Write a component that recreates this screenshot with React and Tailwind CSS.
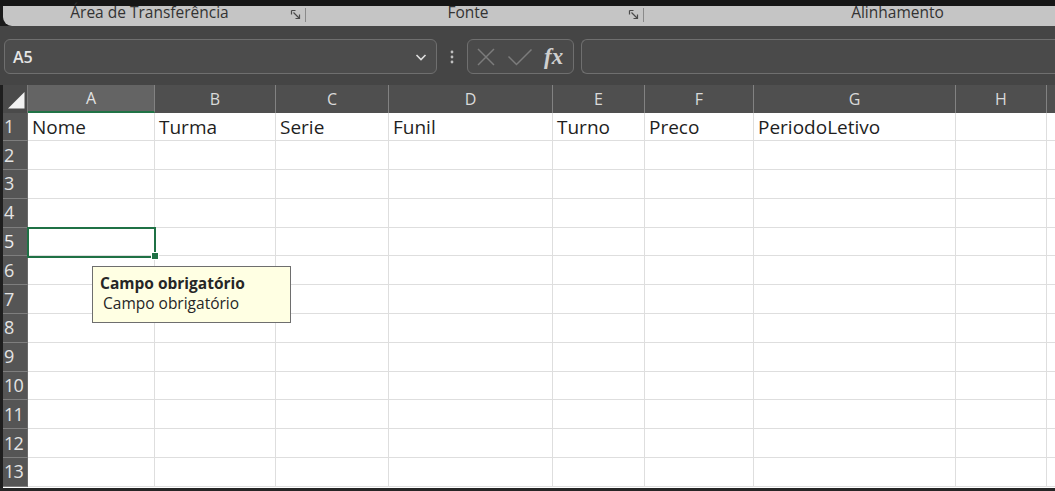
import React from "react";

const cols = [
  { l: "A", w: 127 },
  { l: "B", w: 121 },
  { l: "C", w: 113 },
  { l: "D", w: 164 },
  { l: "E", w: 92 },
  { l: "F", w: 109 },
  { l: "G", w: 202 },
  { l: "H", w: 91 },
  { l: "", w: 20 },
];

const row1 = ["Nome", "Turma", "Serie", "Funil", "Turno", "Preco", "PeriodoLetivo", "", ""];

function Launcher() {
  return (
    <svg width="12" height="12" viewBox="0 0 12 12" className="text-[#4a4a4a]">
      <path d="M1.5 1.5h4M1.5 1.5v4" stroke="currentColor" strokeWidth="1.2" fill="none" />
      <path d="M3.5 3.5l6 6M9.5 5.5v4h-4" stroke="currentColor" strokeWidth="1.2" fill="none" />
    </svg>
  );
}

export default function App() {
  const rows = Array.from({ length: 13 }, (_, i) => i + 1);
  return (
    <div
      className="w-[1055px] h-[491px] overflow-hidden flex flex-col bg-[#1b1b1b]"
      style={{ fontFamily: '"Open Sans", "Noto Sans", sans-serif' }}
    >
      {/* top band */}
      <div className="h-[6px] bg-[#161616] shrink-0" />
      {/* ribbon group labels */}
      <div className="h-[20px] shrink-0 ml-[3px] bg-[#c5c5c5] rounded-bl-[9px] flex items-start text-[15.5px] text-[#333333] leading-none">
        <div className="w-[287px] shrink-0 flex justify-center pl-[6px] -mt-[1px]">Área de Transferência</div>
        <div className="shrink-0 mt-[2px] flex items-center">
          <Launcher />
          <div className="w-px h-[14px] bg-[#8a8a8a] ml-[3px]" />
        </div>
        <div className="w-[322px] shrink-0 flex justify-center pl-[2px] -mt-[1px]">Fonte</div>
        <div className="shrink-0 mt-[2px] flex items-center">
          <Launcher />
          <div className="w-px h-[14px] bg-[#8a8a8a] ml-[3px]" />
        </div>
        <div className="flex-1 min-w-0 flex justify-center -mt-[1px] pl-[96px]">Alinhamento</div>
      </div>
      {/* formula bar */}
      <div className="h-[59px] shrink-0 bg-[#454545] flex items-center pl-[4px] pt-[2px]">
        <div className="w-[433px] h-[35px] rounded-[6px] border border-[#6f6f6f] bg-[#4c4c4c] flex items-center justify-between pl-[8px] pr-[8px]">
          <span className="text-[16px] font-semibold text-[#e6e6e6]">A5</span>
          <svg width="14" height="10" viewBox="0 0 14 10">
            <path d="M2.5 3l4.5 4.5L11.5 3" stroke="#dedede" strokeWidth="1.6" fill="none" />
          </svg>
        </div>
        <div className="w-[30px] flex justify-center">
          <svg width="4" height="16" viewBox="0 0 4 16">
            <circle cx="2" cy="3" r="1.4" fill="#bfbfbf" />
            <circle cx="2" cy="8" r="1.4" fill="#bfbfbf" />
            <circle cx="2" cy="13" r="1.4" fill="#bfbfbf" />
          </svg>
        </div>
        <div className="w-[107px] h-[35px] rounded-[6px] border border-[#6f6f6f] bg-[#4a4a4a] flex items-center pl-[8px] gap-[11px]">
          <svg width="20" height="20" viewBox="0 0 20 20">
            <path d="M2 2l16 16M18 2L2 18" stroke="#7c7c7c" strokeWidth="1.5" fill="none" />
          </svg>
          <svg width="26" height="18" viewBox="0 0 26 18">
            <path d="M1.5 8.5l8 8L24.5 1.5" stroke="#7c7c7c" strokeWidth="1.5" fill="none" />
          </svg>
          <span
            className="text-[23px] italic font-bold text-[#cfcfcf] leading-none"
            style={{ fontFamily: '"Liberation Serif", "DejaVu Serif", serif' }}
          >
            fx
          </span>
        </div>
        <div className="flex-1 h-[35px] ml-[7px] rounded-l-[6px] border border-r-0 border-[#6f6f6f] bg-[#4a4a4a]" />
      </div>
      {/* grid */}
      <div className="flex-1 relative bg-white border-l-[3px] border-[#1e1e1e] flex flex-col">
        {/* header row */}
        <div className="flex h-[27.5px] shrink-0 bg-[#4f4f4f]">
          <div className="w-[25px] shrink-0 bg-[#4a4a4a] border-r border-[#7a7a7a] relative">
            <svg width="25" height="27" viewBox="0 0 25 27" className="absolute left-0 top-0">
              <path d="M5 23.5H21.5V7z" fill="#f2f2f2" />
            </svg>
          </div>
          {cols.map((c, i) => (
            <div
              key={i}
              style={{ width: c.w }}
              className={
                "shrink-0 flex items-center justify-center text-[16px] border-r border-[#828282] " +
                (i === 0
                  ? "bg-[#646464] text-[#e2e2e2] border-b-2 border-b-[#217346]"
                  : "text-[#dadada]")
              }
            >
              {c.l}
            </div>
          ))}
        </div>
        {rows.map((r) => (
          <div key={r} className="flex h-[28.8px] shrink-0">
            <div
              className={
                "w-[25px] shrink-0 flex items-center pl-[1px] text-[18px] border-b border-[#7e7e7e] border-r border-r-[#6a6a6a] " +
                (r === 5 ? "bg-[#5c5c5c] text-[#f0f0f0]" : "bg-[#555555] text-[#e4e4e4]")
              }
              style={{ letterSpacing: "-0.8px" }}
            >
              {r}
            </div>
            {cols.map((c, i) => (
              <div
                key={i}
                style={{ width: c.w }}
                className="shrink-0 relative border-r border-b border-[#dedede] flex items-center pl-[4px] pt-[2px] text-[19px] text-[#1e1e1e] whitespace-nowrap"
              >
                {r === 1 ? row1[i] : ""}
                {r === 5 && i === 0 && (
                  <>
                    <div className="absolute z-10 -left-[1px] -top-[1px] w-[129px] h-[31px] border-2 border-[#1f7145]" />
                    <div className="absolute z-20 left-[123px] top-[24px] w-[8px] h-[8px] bg-[#1f7145] border border-white" />
                  </>
                )}
              </div>
            ))}
          </div>
        ))}
        <div className="flex-1" />
        {/* tooltip */}
        <div className="absolute z-30 left-[89px] top-[181px] w-[199px] h-[57px] bg-[#ffffe3] border border-[#6e6e6e] pl-[7px] pt-[6px] text-[15.5px] text-[#262626] leading-[20px]">
          <div className="font-bold">Campo obrigatório</div>
          <div className="pl-[3px]">Campo obrigatório</div>
        </div>
      </div>
      <div className="h-[3px] shrink-0 bg-[#262626]" />
    </div>
  );
}
